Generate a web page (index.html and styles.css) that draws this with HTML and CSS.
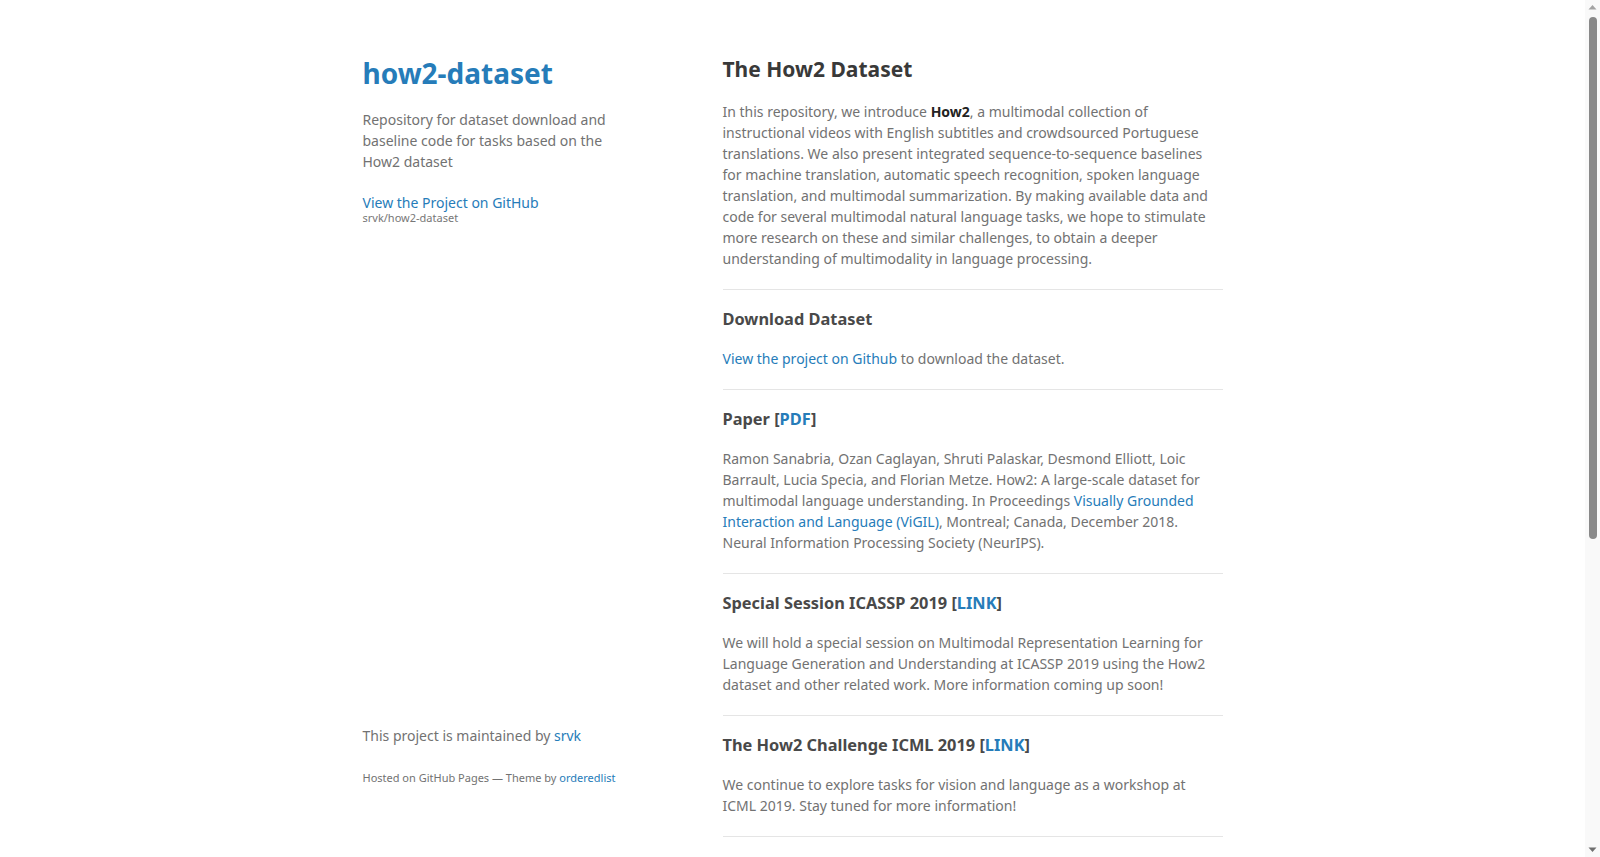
FILE: index.html
```html
<!DOCTYPE html>
<html lang="en-US">
<head>
<meta charset="utf-8"/>
<meta content="width=device-width, initial-scale=1" name="viewport"/>
<title>how2-dataset | Repository for dataset download and baseline code for tasks based on the How2 dataset</title>
<link rel="stylesheet" href="styles.css">
</head>
<body>
<div class="wrapper">
  <aside class="sidebar">
    <header class="site-header">
      <h1 class="site-title"><a href="https://srvk.github.io/how2-dataset/">how2-dataset</a></h1>
      <p class="site-desc">Repository for dataset download and baseline code for tasks based on the How2 dataset</p>
      <p class="view"><a href="https://github.com/srvk/how2-dataset">View the Project on GitHub <small>srvk/how2-dataset</small></a></p>
    </header>
    <footer class="site-footer">
      <p>This project is maintained by <a href="https://github.com/srvk">srvk</a></p>
      <p><small>Hosted on GitHub Pages &mdash; Theme by <a href="https://github.com/orderedlist">orderedlist</a></small></p>
    </footer>
  </aside>

  <main class="content">
    <h2 class="page-title">The How2 Dataset</h2>
    <p>In this repository, we introduce <strong>How2</strong>, a multimodal collection of instructional videos with English subtitles and crowdsourced Portuguese translations. We also present integrated sequence-to-sequence baselines for machine translation, automatic speech recognition, spoken language translation, and multimodal summarization. By making available data and code for several multimodal natural language tasks, we hope to stimulate more research on these and similar challenges, to obtain a deeper understanding of multimodality in language processing.</p>
    <hr>

    <h3>Download Dataset</h3>
    <p><a href="https://github.com/srvk/how2-dataset">View the project on Github</a> to download the dataset.</p>
    <hr>

    <h3>Paper [<a href="https://arxiv.org/abs/1811.00347">PDF</a>]</h3>
    <p>Ramon Sanabria, Ozan Caglayan, Shruti Palaskar, Desmond Elliott, Loic Barrault, Lucia Specia, and Florian Metze. How2: A large-scale dataset for multimodal language understanding. In Proceedings <a href="https://nips2018vigil.github.io/">Visually Grounded Interaction and Language (ViGIL)</a>, Montreal; Canada, December 2018. Neural Information Processing Society (NeurIPS).</p>
    <hr>

    <h3>Special Session ICASSP 2019 [<a href="https://2019.ieeeicassp.org/">LINK</a>]</h3>
    <p>We will hold a special session on Multimodal Representation Learning for Language Generation and Understanding at ICASSP 2019 using the How2 dataset and other related work. More information coming up soon!</p>
    <hr>

    <h3>The How2 Challenge ICML 2019 [<a href="https://srvk.github.io/how2-challenge/">LINK</a>]</h3>
    <p>We continue to explore tasks for vision and language as a workshop at ICML 2019. Stay tuned for more information!</p>
    <hr>
  </main>
</div>

<!-- page scrollbar, drawn over the right edge -->
<div class="scrollbar">
  <svg class="scroll-btn" viewBox="0 0 15 15" width="15" height="15"><path d="M3.5 9.5h8l-4-4.5z" fill="#a3a3a3"/></svg>
  <div class="scroll-thumb"></div>
  <svg class="scroll-btn" viewBox="0 0 15 15" width="15" height="15"><path d="M3.5 5.5h8l-4 4.5z" fill="#6f6f6f"/></svg>
</div>
</body>
</html>
```

FILE: styles.css
```css
html {
  overflow: hidden;
}

body {
  background-color: #fff;
  margin: 0;
  padding: 58px 73px 8px 58px;
  font: 14px/1.5 "Noto Sans", "Helvetica Neue", Helvetica, Arial, sans-serif;
  color: #727272;
  font-weight: 400;
}

h1, h2, h3 {
  color: #222;
  margin: 0 0 20px;
  line-height: 1.1;
}

p {
  margin: 0 0 20px;
}

a {
  color: #267CB9;
  text-decoration: none;
}

a:hover, a:focus {
  color: #069;
  font-weight: bold;
}

strong {
  color: #222;
  font-weight: 700;
}

small {
  font-size: 11px;
}

hr {
  border: 0;
  background: #e5e5e5;
  height: 1px;
  margin: 0 0 20px;
}

/* two columns: sidebar on the left, page text on the right */
.wrapper {
  width: 860px;
  margin: 0 auto;
  display: flex;
  justify-content: space-between;
  align-items: flex-start;
}

.sidebar {
  width: 270px;
  height: calc(100vh - 108px);
  display: flex;
  flex-direction: column;
  justify-content: space-between;
}

.site-title {
  font-size: 28px;
}

.view a small {
  display: block;
  font-size: 11px;
  color: #777;
  margin-top: -0.3em;
}

.content {
  width: 500px;
  padding-bottom: 50px;
}

.page-title {
  font-size: 21px;
  color: #393939;
}

.content h3 {
  font-size: 16.38px;
  color: #494949;
}

.scrollbar {
  position: fixed;
  top: 0;
  right: 0;
  width: 15px;
  height: 100vh;
  background: #f9f9f9;
  display: flex;
  flex-direction: column;
  align-items: center;
}

.scroll-btn {
  flex: none;
  display: block;
}

.scroll-thumb {
  width: 8px;
  height: 522px;
  margin-top: 2px;
  margin-left: 1px;
  border-radius: 4px;
  background: #898989;
  flex: none;
}

.scroll-btn:last-child {
  margin-top: auto;
}
```
